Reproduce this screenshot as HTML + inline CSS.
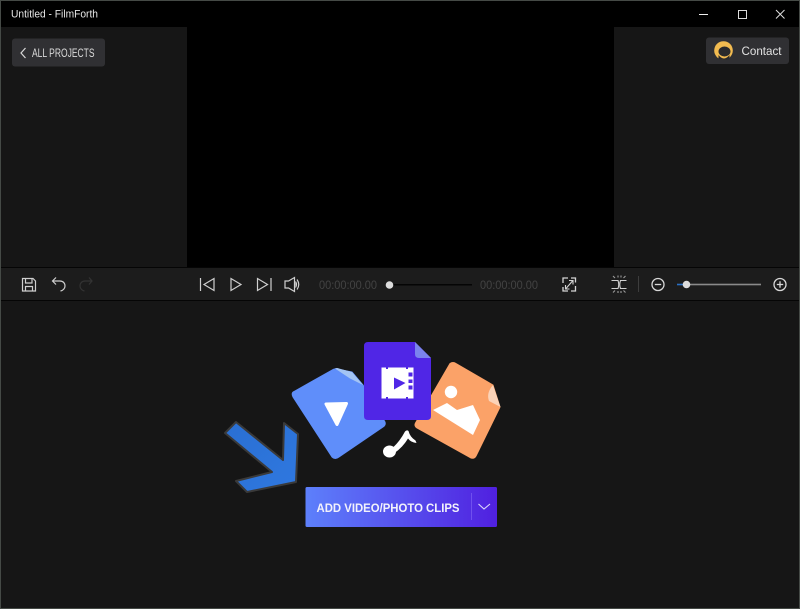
<!DOCTYPE html>
<html>
<head>
<meta charset="utf-8">
<title>Untitled - FilmForth</title>
<style>
html,body{margin:0;padding:0;background:#161616;width:800px;height:609px;overflow:hidden}
svg{display:block;position:absolute;left:0;top:0;filter:blur(.35px)}
text{font-family:"Liberation Sans",sans-serif}
</style>
</head>
<body>
<svg width="800" height="609" viewBox="0 0 800 609" xmlns="http://www.w3.org/2000/svg">
<defs>
<linearGradient id="btn" x1="0" x2="1" y1="0" y2="0">
<stop offset="0" stop-color="#5d80fb"/><stop offset="1" stop-color="#5020e0"/>
</linearGradient>
<linearGradient id="arr" x1="0" x2="1" y1="0" y2="1">
<stop offset="0" stop-color="#2a6fd2"/><stop offset="1" stop-color="#2f78e0"/>
</linearGradient>
</defs>
<rect width="800" height="609" fill="#161616"/>
<!-- title bar -->
<rect width="800" height="27" fill="#000"/>
<rect x="187" y="27" width="427" height="240" fill="#000"/>
<!-- toolbar -->
<rect x="0" y="267" width="800" height="1" fill="#050505"/>
<rect x="0" y="268" width="800" height="32" fill="#1c1c1c"/>
<rect x="0" y="300" width="800" height="1" fill="#050505"/>
<!-- window border -->
<rect x="0" y="0" width="800" height="1" fill="#454a46"/>
<rect x="0" y="0" width="1" height="609" fill="#454a46"/>
<rect x="799" y="0" width="1" height="609" fill="#454a46"/>
<rect x="0" y="608" width="800" height="1" fill="#454a46"/>

<text x="11" y="17.500" font-size="10.800" fill="#e6e6e6" textLength="87" lengthAdjust="spacingAndGlyphs">Untitled - FilmForth</text>
<!-- window controls -->
<path d="M699 14.500H708" stroke="#eee" stroke-width="1" fill="none"/>
<rect x="738.500" y="10.500" width="8" height="8" stroke="#ddd" stroke-width="1" fill="none"/>
<path d="M776 10L784.500 18.500M784.500 10L776 18.500" stroke="#ddd" stroke-width="1" fill="none"/>

<!-- all projects -->
<rect x="12" y="38.500" width="93" height="28" rx="3" fill="#303033"/>
<path d="M25.500 48L21 53L25.500 58" stroke="#d8d8d8" stroke-width="1.200" fill="none"/>
<text x="32" y="57" font-size="11.500" fill="#dcdcdc" textLength="62.500" lengthAdjust="spacingAndGlyphs">ALL PROJECTS</text>

<!-- contact -->
<rect x="706" y="37.500" width="83" height="26.500" rx="3" fill="#303033"/>
<circle cx="723.500" cy="50.500" r="9.300" fill="#f2bb50"/>
<ellipse cx="724.500" cy="51.500" rx="6" ry="5" fill="#2a2a2c"/>
<path d="M718.500 55Q724 62 729.500 55L729.500 59Q724 61 718.500 59Z" fill="#2a2a2c"/>
<text x="741.500" y="55" font-size="12" fill="#e2e2e2" textLength="40" lengthAdjust="spacingAndGlyphs">Contact</text>

<!-- toolbar left icons -->
<g fill="none" stroke="#cfcfcf" stroke-width="1.200">
<path d="M22.500 278.500H33L35.500 281V291H22.500Z"/>
<path d="M25.500 278.500V283H32V278.500"/>
<path d="M25.500 291V286.500H32.500V291"/>
<path d="M52.500 281H60C63.500 281 65 283.500 65 286C65 288.500 63 290.500 60.500 291"/>
<path d="M56 277.500L52.500 281L56 284.500"/>
<path d="M92 281H85C81.500 281 80 283.500 80 286C80 288.500 82 290.500 84.500 291M89 277.500L92 281L89 284.500" stroke="#333"/>
<!-- transport -->
<path d="M200.500 278V291" />
<path d="M214 278.500V290.500L204 284.500Z"/>
<path d="M231 278.500V290.500L241 284.500Z"/>
<path d="M257.500 278.500V290.500L267.500 284.500Z"/>
<path d="M271 278V291"/>
<path d="M285 281V288H288.500L294.500 291.500V277.500L288.500 281Z"/>
<path d="M295.500 281.500Q297.500 284.500 295.500 287.500M297 279.500Q300.500 284.500 297 289.500M294.500 283Q295.500 284.500 294.500 286"/>
</g>
<text x="319" y="289" font-size="11.500" fill="#434343" textLength="58" lengthAdjust="spacingAndGlyphs">00:00:00.00</text>
<rect x="390" y="284" width="82" height="1.500" fill="#050505"/>
<circle cx="389.500" cy="285" r="3.800" fill="#dcdcdc"/>
<text x="480" y="289" font-size="11.500" fill="#434343" textLength="58" lengthAdjust="spacingAndGlyphs">00:00:00.00</text>
<!-- fit icon -->
<g fill="none" stroke="#d4d4d4" stroke-width="1.300">
<path d="M563 283V278H568M571 278H575.500V282.500M575.500 286V291H571M568 291H563V287"/>
<path d="M566 288.500L572.500 281M569 280.500H573V284.500M565.500 285V289H569.500" stroke-width="1.100"/>
</g>
<!-- split icon -->
<g fill="none" stroke="#cfcfcf" stroke-width="1.100">
<path d="M611.500 280.500H618Q619.500 284.500 618 288.500H611.500"/>
<path d="M626.500 280.500H620.500Q619 284.500 620.500 288.500H626.500" />
<path d="M613 276L615 278M625.500 276L623.500 278M618 275.500V277.500M621 275.500V277.500M613 292.500L615 290.500M625.500 292.500L623.500 290.500M618 291V293M621 291V293" stroke="#9c9c9c"/>
</g>
<rect x="638" y="276" width="1" height="16" fill="#3d3d3d"/>
<!-- zoom -->
<g fill="none" stroke="#d8d8d8" stroke-width="1.300">
<circle cx="658" cy="284.500" r="6"/>
<path d="M654.800 284.500H661.200"/>
<circle cx="780" cy="284.500" r="6"/>
<path d="M776.800 284.500H783.200M780 281.300V287.700"/>
</g>
<rect x="677" y="283.700" width="9" height="1.600" fill="#2a6fc4"/>
<rect x="686" y="283.700" width="75" height="1.600" fill="#8a8a8a"/>
<circle cx="686.500" cy="284.500" r="3.800" fill="#dcdcdc"/>

<!-- blue file -->
<path d="M294 391.500L333 369.500Q336 368 339 369.500L352 372L363 385L385 422Q386 425 383 427L339 457Q335 460 332 457L293 397Q291 393 294 391.500Z" fill="#5f8efa" stroke="#5f8efa" stroke-width="1" stroke-linejoin="round"/>
<path d="M335 368.500Q337 367.500 339 368.500L352 372L363 385L350 378.500Z" fill="#a3c4f4"/>
<path d="M326 404L346.500 403.500L337 424.500Z" fill="#fff" stroke="#fff" stroke-width="3" stroke-linejoin="round"/>

<!-- orange file -->
<path d="M450 363.500Q453 361.500 456 363.500L493 385L500 407L476 456Q474 459.500 470 457.500L417 428Q414 426 415.500 423Z" fill="#fba268" stroke="#fba268" stroke-width="1" stroke-linejoin="round"/>
<path d="M493 385L500.500 407L489 401Q486 393 493 385Z" fill="#fbd3b8"/>
<circle cx="451" cy="392" r="6.200" fill="#fff"/>
<path d="M433 410L447 403L457 410L473 405L480 420L473 435Z" fill="#fff"/>

<!-- purple file -->
<path d="M368 342H415L431 358V416Q431 420 427 420H368Q364 420 364 416V346Q364 342 368 342Z" fill="#5026e6"/>
<path d="M415 342L431 358H419Q415 358 415 354Z" fill="#7b83ee"/>
<path d="M381.500 367.500H413.500V398.500H381.500Z" fill="#fff"/>
<path d="M394 377.500L405.500 383L394 389.500Z" fill="#5026e6"/>
<path d="M408.500 372.500H412.500V376.500H408.500ZM408.500 379.500H412.500V383H408.500ZM408.500 385.500H412.500V389.500H408.500Z" fill="#5026e6"/>
<path d="M386 367.500H388V369H386ZM406 367.500H408V369H406ZM386 397H388V398.500H386ZM406 397H408V398.500H406Z" fill="#5026e6"/>

<!-- music note -->
<ellipse cx="389.500" cy="451.500" rx="6.500" ry="6" fill="#fff"/>
<path d="M393 447.500Q400 441 405 431.500Q407 429.500 408.500 431Q410 437 415.500 440.500L416.500 443Q411 442.500 408 438.500Q403 447 394.500 453Z" fill="#fff"/>

<!-- arrow -->
<path d="M225 433L236 422L283 460L284 423L298 434L296 482L247 492L236 481L272 472Z" fill="url(#arr)" stroke="#3a3a3a" stroke-width="2" stroke-linejoin="round"/>

<!-- button -->
<rect x="305.500" y="487" width="191.500" height="40" rx="1.500" fill="url(#btn)"/>
<rect x="471" y="493" width="1" height="27" fill="#7050ee"/>
<text x="316.500" y="512" font-size="12" font-weight="700" fill="#f2f2fb" textLength="143" lengthAdjust="spacingAndGlyphs">ADD VIDEO/PHOTO CLIPS</text>
<path d="M478.500 504L484 509L490 504" stroke="#dcd8fb" stroke-width="1.100" fill="none"/>
</svg>
</body>
</html>
